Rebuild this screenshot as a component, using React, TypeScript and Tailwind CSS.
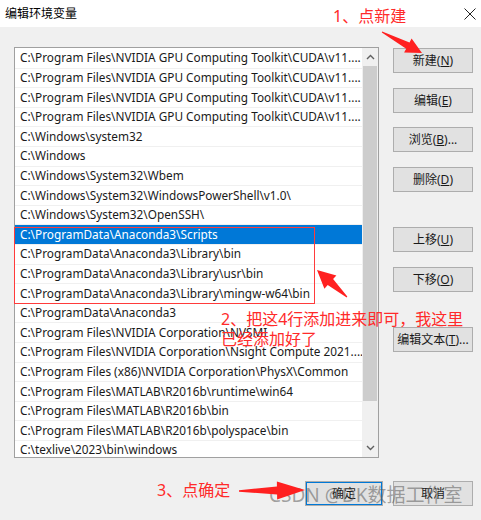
import React from 'react';

const rows = [
  'C:\\Program Files\\NVIDIA GPU Computing Toolkit\\CUDA\\v11....',
  'C:\\Program Files\\NVIDIA GPU Computing Toolkit\\CUDA\\v11....',
  'C:\\Program Files\\NVIDIA GPU Computing Toolkit\\CUDA\\v11....',
  'C:\\Program Files\\NVIDIA GPU Computing Toolkit\\CUDA\\v11....',
  'C:\\Windows\\system32',
  'C:\\Windows',
  'C:\\Windows\\System32\\Wbem',
  'C:\\Windows\\System32\\WindowsPowerShell\\v1.0\\',
  'C:\\Windows\\System32\\OpenSSH\\',
  'C:\\ProgramData\\Anaconda3\\Scripts',
  'C:\\ProgramData\\Anaconda3\\Library\\bin',
  'C:\\ProgramData\\Anaconda3\\Library\\usr\\bin',
  'C:\\ProgramData\\Anaconda3\\Library\\mingw-w64\\bin',
  'C:\\ProgramData\\Anaconda3',
  'C:\\Program Files\\NVIDIA Corporation\\NVSMI',
  'C:\\Program Files\\NVIDIA Corporation\\Nsight Compute 2021....',
  'C:\\Program Files (x86)\\NVIDIA Corporation\\PhysX\\Common',
  'C:\\Program Files\\MATLAB\\R2016b\\runtime\\win64',
  'C:\\Program Files\\MATLAB\\R2016b\\bin',
  'C:\\Program Files\\MATLAB\\R2016b\\polyspace\\bin',
  'C:\\texlive\\2023\\bin\\windows',
];

// tapered arrow polygon from tail to tip
function arrowPoints(tx: number, ty: number, px: number, py: number, head = 18, hw = 8, tw = 1) {
  const dx = px - tx;
  const dy = py - ty;
  const len = Math.hypot(dx, dy);
  const ux = dx / len;
  const uy = dy / len;
  const nx = -uy;
  const ny = ux;
  const bx = px - ux * head;
  const by = py - uy * head;
  const nw = hw * 0.45;
  const pts = [
    [tx + nx * tw * 0.5, ty + ny * tw * 0.5],
    [bx + nx * nw, by + ny * nw],
    [bx + nx * hw, by + ny * hw],
    [px, py],
    [bx - nx * hw, by - ny * hw],
    [bx - nx * nw, by - ny * nw],
    [tx - nx * tw * 0.5, ty - ny * tw * 0.5],
  ];
  return pts.map((p) => `${p[0].toFixed(1)},${p[1].toFixed(1)}`).join(' ');
}

function Btn({ children, className = '' }: { children: React.ReactNode; className?: string }) {
  return (
    <div
      className={`flex h-[25px] items-center justify-center border border-[#adadad] bg-[#e1e1e1] text-[12px] text-[#1a1a1a] ${className}`}
    >
      {children}
    </div>
  );
}

export default function App() {
  return (
    <div
      className="relative h-[520px] w-[481px] overflow-hidden bg-[#f0f0f0]"
      style={{ fontFamily: '"Noto Sans", "Noto Sans CJK SC", sans-serif' }}
    >
      {/* title bar */}
      <div className="flex h-[27px] items-center justify-between bg-white pl-[5px] pr-[3px]">
        <span className="text-[12px] text-black">编辑环境变量</span>
        <svg width="14" height="14" viewBox="0 0 14 14" className="mr-[1px]">
          <path d="M1.5 1.5L12.5 12.5M12.5 1.5L1.5 12.5" stroke="#222" strokeWidth="1" fill="none" />
        </svg>
      </div>

      <div className="flex pl-[14px] pt-[20px]">
        {/* list box */}
        <div className="flex h-[411px] w-[365px] overflow-hidden border border-[#a0a0a0] bg-white">
          <div className="flex min-w-0 flex-1 flex-col overflow-hidden pt-[1px]">
            {rows.map((r, i) => (
              <div
                key={i}
                className={`flex h-[19.6px] shrink-0 items-center overflow-hidden whitespace-nowrap border-b border-[#f0f0f0] pl-[5px] text-[11.8px] ${
                  i === 9 ? 'bg-[#0078d7] text-white' : 'text-[#1a1a1a]'
                }`}
              >
                {r}
              </div>
            ))}
          </div>
          {/* scrollbar */}
          <div className="flex w-[16px] shrink-0 flex-col bg-[#f0f0f0]">
            <div className="flex h-[18px] items-center justify-center">
              <svg width="9" height="6" viewBox="0 0 9 6">
                <path d="M1 5L4.5 1.5L8 5" stroke="#606060" strokeWidth="1.4" fill="none" />
              </svg>
            </div>
            <div className="mx-[1px] h-[335px] bg-[#cdcdcd]" />
            <div className="flex-1" />
            <div className="flex h-[18px] items-center justify-center">
              <svg width="9" height="6" viewBox="0 0 9 6">
                <path d="M1 1L4.5 4.5L8 1" stroke="#606060" strokeWidth="1.4" fill="none" />
              </svg>
            </div>
          </div>
        </div>

        {/* side buttons */}
        <div className="ml-[14px] flex w-[80px] flex-col pt-[1px]">
          <Btn>新建(<u>N</u>)</Btn>
          <Btn className="mt-[15px]">编辑(<u>E</u>)</Btn>
          <Btn className="mt-[14px]">浏览(<u>B</u>)...</Btn>
          <Btn className="mt-[15px]">删除(<u>D</u>)</Btn>
          <Btn className="mt-[35px]">上移(<u>U</u>)</Btn>
          <Btn className="mt-[15px]">下移(<u>O</u>)</Btn>
          <Btn className="mt-[35px]">编辑文本(<u>T</u>)...</Btn>
        </div>
      </div>

      {/* bottom buttons */}
      <div className="mt-[23px] flex justify-end gap-[10px] pr-[8px]">
        <Btn className="w-[78px] border-[#0078d7] outline outline-1 outline-offset-[-2px] outline-[#0078d7]">确定</Btn>
        <Btn className="w-[80px]">取消</Btn>
      </div>

      {/* annotations */}
      <div className="pointer-events-none absolute left-[333px] top-[5px] text-[16px] leading-[22px] text-[#ff2a2a]">
        1、点新建
      </div>
      <div className="pointer-events-none absolute left-[14px] top-[227px] h-[77px] w-[301px] border border-[#ff3b3b]" />
      <div className="pointer-events-none absolute left-[221px] top-[309px] text-[16px] leading-[20px] text-[#ff2a2a]">
        <div>2、把这4行添加进来即可，我这里</div>
        <div>已经添加好了</div>
      </div>
      <div className="pointer-events-none absolute left-[157px] top-[479px] text-[16px] leading-[22px] text-[#ff2a2a]">
        3、点确定
      </div>
      <div className="pointer-events-none absolute left-[269px] top-[481px] text-[19px] leading-[28px] text-[rgba(90,90,90,0.55)]">
        CSDN @DK数据工作室
      </div>

      <svg className="pointer-events-none absolute left-0 top-0" width="481" height="520">
        <polygon points={arrowPoints(382, 32, 422, 53, 16, 8, 1)} fill="#ff2020" />
        <polygon points={arrowPoints(347, 297, 317, 270, 18, 9, 1)} fill="#ff2020" />
        <polygon points={arrowPoints(239, 491, 305, 490, 28, 9, 1.5)} fill="#ff2020" />
      </svg>
    </div>
  );
}
